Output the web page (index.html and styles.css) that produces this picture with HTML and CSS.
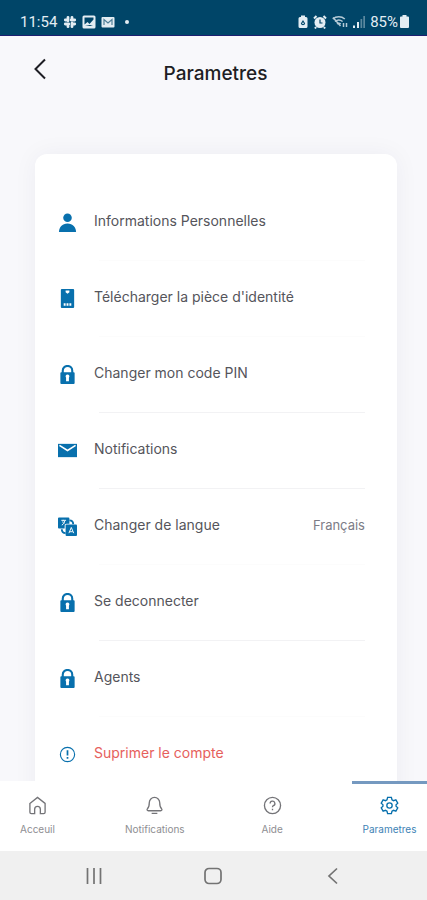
FILE: index.html
```html
<!doctype html>
<html lang="fr">
<head>
  <meta charset="utf-8">
  <title>Parametres</title>
  <meta name="viewport" content="width=device-width,initial-scale=1">
  <link rel="stylesheet" href="styles.css">
</head>
<body>

  <!-- Shared icons -->
  <svg class="sprite" aria-hidden="true">
    <symbol id="lock" viewBox="0 0 20 20">
      <path d="M5 9V6a5 5 0 0 1 10 0v3" fill="none" stroke="currentColor" stroke-width="2.200"/>
      <path fill-rule="evenodd" d="M3.500 7.500h13a1 1 0 0 1 1 1V19a1 1 0 0 1-1 1h-13a1 1 0 0 1-1-1V8.500a1 1 0 0 1 1-1zM10 10a2 2 0 0 0-1.500 3.300v3.700h3v-3.700A2 2 0 0 0 10 10z"/>
    </symbol>
  </svg>

  <!-- Status bar -->
  <div class="status">
    <span class="time">11:54</span>
    <svg width="14" height="14" viewBox="0 0 14 14"><path d="M5 2.300v3.500M9 8.200v3.500M2.300 9h3.500M8.200 5h3.500M5 9v2.700M9 2.300V5M2.300 5H5M9 9h2.700" fill="none" stroke="currentColor" stroke-width="2.800" stroke-linecap="round"/></svg>
    <svg width="14" height="14" viewBox="0 0 14 14"><path fill-rule="evenodd" d="M2 .5h10A1.500 1.500 0 0 1 13.500 2v10a1.500 1.500 0 0 1-1.500 1.500H2A1.500 1.500 0 0 1 .5 12V2A1.500 1.500 0 0 1 2 .5zM2.500 2.500v7L5.500 7l2 2 4-4.500v-2zM5 3.500v2M3 11h8l-3-1z"/></svg>
    <svg width="14" height="14" viewBox="0 0 14 14"><rect x=".5" y="2" width="13" height="10.500" rx="1"/><path d="M3 10V4.500L7 8l4-3.500V10" fill="none" stroke="#4f7f98" stroke-width="1.200"/></svg>
    <span class="dot"></span>
    <span class="spacer"></span>
    <svg width="10" height="14" viewBox="0 0 10 14"><path fill-rule="evenodd" d="M3 .5h4V2h1a1.500 1.500 0 0 1 1.500 1.500v8A1.500 1.500 0 0 1 8 13H2a1.500 1.500 0 0 1-1.500-1.500v-8A1.500 1.500 0 0 1 2 2h1zM5 5 2.800 8.500A2.300 2.300 0 0 0 7.200 8.500zM5 7l1 2H4z"/></svg>
    <svg width="14" height="14" viewBox="0 0 14 14"><circle cx="7" cy="7.500" r="5.500"/><path d="M1 3.500 3.500 1M13 3.500 10.500 1M3 12l-1 1.500M11 12l1 1.500" stroke="currentColor" stroke-width="2"/><path d="M7 4.500V8h2.500" fill="none" stroke="#004568" stroke-width="1.200"/></svg>
    <svg width="16" height="14" viewBox="0 0 16 14"><g fill="none" stroke="currentColor" opacity=".8" stroke-width="1.500"><path d="M.8 4a9 9 0 0 1 12 0M3 6.500a6 6 0 0 1 7.600 0M5 9a3 3 0 0 1 3.800 0"/><path d="M1 2.500 8.500 11M11.500 8v4M14.500 8v4"/></g></svg>
    <svg width="12" height="14" viewBox="0 0 12 14"><path d="M0 10.500h2V13H0zM4 7h2v6H4z"/><path opacity=".4" d="M7.500 4h1.700v9H7.500zM10.300 1H12v12h-1.700z"/></svg>
    <span class="battery">85%<svg width="9" height="13" viewBox="0 0 9 13"><path d="M2.500 0h4v1.500H8a1 1 0 0 1 1 1V12a1 1 0 0 1-1 1H1a1 1 0 0 1-1-1V2.500a1 1 0 0 1 1-1h1.500z"/></svg></span>
  </div>

  <header class="header">
    <button class="back" type="button" aria-label="Retour">
      <svg width="14" height="22" viewBox="0 0 14 22"><path d="M12 1.500 2.500 11l9.500 9.500" fill="none" stroke="currentColor" stroke-width="2"/></svg>
    </button>
    <h1>Parametres</h1>
  </header>

  <main class="content">
    <ul class="card">
      <li class="faint">
        <button class="row" type="button">
          <svg class="icon" viewBox="0 0 20 20"><circle cx="10" cy="5" r="4.500"/><path d="M1 20c0-5 3.500-9 9-9s9 4 9 9z"/></svg>
          <span class="label">Informations Personnelles</span>
        </button>
      </li>
      <li class="faint">
        <button class="row" type="button">
          <svg class="icon" viewBox="0 0 20 20"><path fill-rule="evenodd" d="M4 0h12a1 1 0 0 1 1 1v18a1 1 0 0 1-1 1H4a1 1 0 0 1-1-1V1a1 1 0 0 1 1-1zM8 1.500v2L10 5l2-1.500v-2zM6 15v2.500h2V15zM9 15v2.500h2V15zM12 15v2.500h2V15z"/></svg>
          <span class="label">Télécharger la pièce d'identité</span>
        </button>
      </li>
      <li>
        <button class="row" type="button">
          <svg class="icon"><use href="#lock"/></svg>
          <span class="label">Changer mon code PIN</span>
        </button>
      </li>
      <li>
        <button class="row" type="button">
          <svg class="icon" viewBox="0 0 20 20"><path d="M0 3h20v14H0z"/><path d="M1.500 4.500 10 10l8.500-5.500" fill="none" stroke="#fff" stroke-width="1.600"/></svg>
          <span class="label">Notifications</span>
        </button>
      </li>
      <li class="faint">
        <button class="row" type="button">
          <svg class="icon" viewBox="0 0 20 20"><path d="M1 .5h10a1 1 0 0 1 1 1V7H9a2 2 0 0 0-2 2v3H1a1 1 0 0 1-1-1V1.500a1 1 0 0 1 1-1z"/><rect x="8" y="8" width="12" height="12" rx="1"/><path d="M3.500 3.500h5M5.500 3v1.500M4 8.500c2-1 3-2.500 3-4.500M4.500 5l2 2M11.500 17l2.500-6 2.500 6M12.500 15.500h3" fill="none" stroke="#fff" stroke-width="1"/><path d="M12 3.500c2.500 0 4 1 4 4M8 17c-2.500 0-4-1-4-4" fill="none" stroke="currentColor" stroke-width="2"/></svg>
          <span class="label">Changer de langue</span>
          <span class="value">Français</span>
        </button>
      </li>
      <li>
        <button class="row" type="button">
          <svg class="icon"><use href="#lock"/></svg>
          <span class="label">Se deconnecter</span>
        </button>
      </li>
      <li class="faint">
        <button class="row" type="button">
          <svg class="icon"><use href="#lock"/></svg>
          <span class="label">Agents</span>
        </button>
      </li>
      <li class="faint">
        <button class="row danger" type="button">
          <svg class="icon" viewBox="0 0 20 20"><circle cx="10" cy="10" r="7.500" fill="none" stroke="currentColor" stroke-width="1.200"/><path d="M10 5.500v5.500M10 12.500v2" stroke="currentColor" stroke-width="1.800"/></svg>
          <span class="label">Suprimer le compte</span>
        </button>
      </li>
    </ul>
  </main>

  <!-- Tabs -->
  <nav class="tabs">
    <a class="tab" href="#accueil">
      <svg viewBox="0 0 20 20"><path d="M2 7.800 10 1.500l8 6.300V17a1.500 1.500 0 0 1-1.500 1.500H13V14a3 3 0 0 0-6 0v4.500H3.500A1.500 1.500 0 0 1 2 17z"/></svg>
      <span>Acceuil</span>
    </a>
    <a class="tab" href="#notifications">
      <svg viewBox="0 0 20 20"><path d="M4.500 7a5.500 5.500 0 0 1 11 0c0 4 .8 5.500 2 6.500.7.800.3 2-1 2h-13c-1.300 0-1.700-1.200-1-2 1.200-1 2-2.500 2-6.500zM7 18.200h6"/></svg>
      <span>Notifications</span>
    </a>
    <a class="tab" href="#aide">
      <svg viewBox="0 0 20 20"><circle cx="10" cy="10" r="8.500"/><path d="M7.500 8a2.500 2.500 0 1 1 3.500 2.200c-.7.300-1 .8-1 1.600M10 13.500V15"/></svg>
      <span>Aide</span>
    </a>
    <a class="tab active" href="#parametres" aria-current="page">
      <svg viewBox="0 0 20 20"><path d="M8 1.500h4l.6 2.400 1.600 1 2.500-.8 2 3.500L16.900 9.300v1.400l1.800 1.700-2 3.500-2.500-.8-1.600 1-.6 2.400H8l-.6-2.400-1.600-1-2.500.8-2-3.500 1.800-1.700V9.300L1.300 7.600l2-3.500 2.500.8 1.600-1z"/><circle cx="10" cy="10" r="2.800"/></svg>
      <span>Parametres</span>
    </a>
  </nav>

  <!-- System navigation -->
  <div class="sysnav">
    <button type="button" aria-label="Applications récentes">
      <svg viewBox="0 0 20 20"><path d="M3.500 2v16M10 2v16M16.500 2v16"/></svg>
    </button>
    <button type="button" aria-label="Accueil">
      <svg viewBox="0 0 20 20"><rect x="2" y="2.500" width="16" height="15" rx="4"/></svg>
    </button>
    <button type="button" aria-label="Précédent">
      <svg viewBox="0 0 20 20"><path d="M14 2.500 6 10l8 7.500"/></svg>
    </button>
  </div>

</body>
</html>
```
FILE: styles.css
```css
:root{
  --blue:#0870ad;
  --navy:#004568;
  --text:#55555b;
  --muted:#8e8e92;
  --page:#f8f8fb;
}

/* ---------- Reset ---------- */
*,*::before,*::after{box-sizing:border-box}
body{
  margin:0;
  height:100vh;
  display:flex;
  flex-direction:column;
  background:var(--page);
  color:var(--text);
  font-family:Inter,"Open Sans",sans-serif;
  overflow:hidden;
}
button{border:0;padding:0;background:none;color:inherit;font:inherit;cursor:pointer}
svg{display:block;flex:none;fill:currentColor}
.sprite{position:absolute;width:0;height:0}

/* ---------- Status bar ---------- */
.status{
  flex:none;
  display:flex;
  align-items:center;
  gap:5px;
  height:36px;
  padding:8px 18px 0 20px;
  background:var(--navy);
  border-bottom:1px solid #1d1f70;
  color:#e3edf3;
  font:15px/20px Roboto,sans-serif;
}
.time{margin-right:1px}
.dot{width:4px;height:4px;margin-left:5px;border-radius:50%;background:currentColor}
.spacer{flex:1}
.battery{display:flex;align-items:center;gap:2px}

/* ---------- Header ---------- */
.header{
  flex:none;
  display:grid;
  grid-template-columns:64px 1fr 60px;
  align-items:start;
  height:88px;
  padding-top:22px;
  color:#1e1e24;
}
.back{display:grid;place-items:center;height:22px;padding-left:16px}
h1{margin:4px 0 0;text-align:center;font-size:19px;line-height:24px;font-weight:500}

/* ---------- Settings card ---------- */
.content{flex:1;min-height:0;padding:30px 30px 0 35px;overflow:hidden}
.card{
  margin:0;
  padding:31px 0;
  list-style:none;
  background:#fff;
  border-radius:12px;
  box-shadow:0 0 24px rgb(40 40 70 / .05);
}
.card li::after{
  content:"";
  display:block;
  height:1px;
  margin:0 32px 0 64px;
  background:#f2f2f4;
}
.card li.faint::after{background:#fcfcfc}
.row{
  display:flex;
  align-items:center;
  width:100%;
  height:75px;
  padding:0 32px 0 23px;
  text-align:left;
  font-size:14px;
  line-height:20px;
}
.icon{width:19px;height:19px;margin-right:17px;color:var(--blue)}
.label{flex:1;padding-bottom:4px}
.value{padding-bottom:4px;color:#7c7c86;font-size:13px}
.danger .label{color:#e6605c}

/* ---------- Tabs ---------- */
.tabs{flex:none;display:flex;justify-content:space-between;height:70px;background:#fff}
.tab{
  display:flex;
  flex-direction:column;
  align-items:center;
  gap:8px;
  width:75px;
  padding-top:12px;
  border-top:3px solid transparent;
  color:var(--muted);
  font-size:10px;
  line-height:12px;
  text-decoration:none;
}
.tab svg{width:19px;height:19px;fill:none;stroke:#747478;stroke-width:1.4}
.tab.active{border-color:#7599c0;color:#3d82b5}
.tab.active svg{stroke:var(--blue)}

/* ---------- System navigation ---------- */
.sysnav{
  flex:none;
  display:flex;
  justify-content:space-around;
  height:49px;
  padding:0 34px;
  background:#f0f0f0;
  color:#737373;
}
.sysnav button{display:grid;place-items:center;width:48px}
.sysnav svg{width:20px;height:20px;fill:none;stroke:currentColor;stroke-width:1.7}
```
